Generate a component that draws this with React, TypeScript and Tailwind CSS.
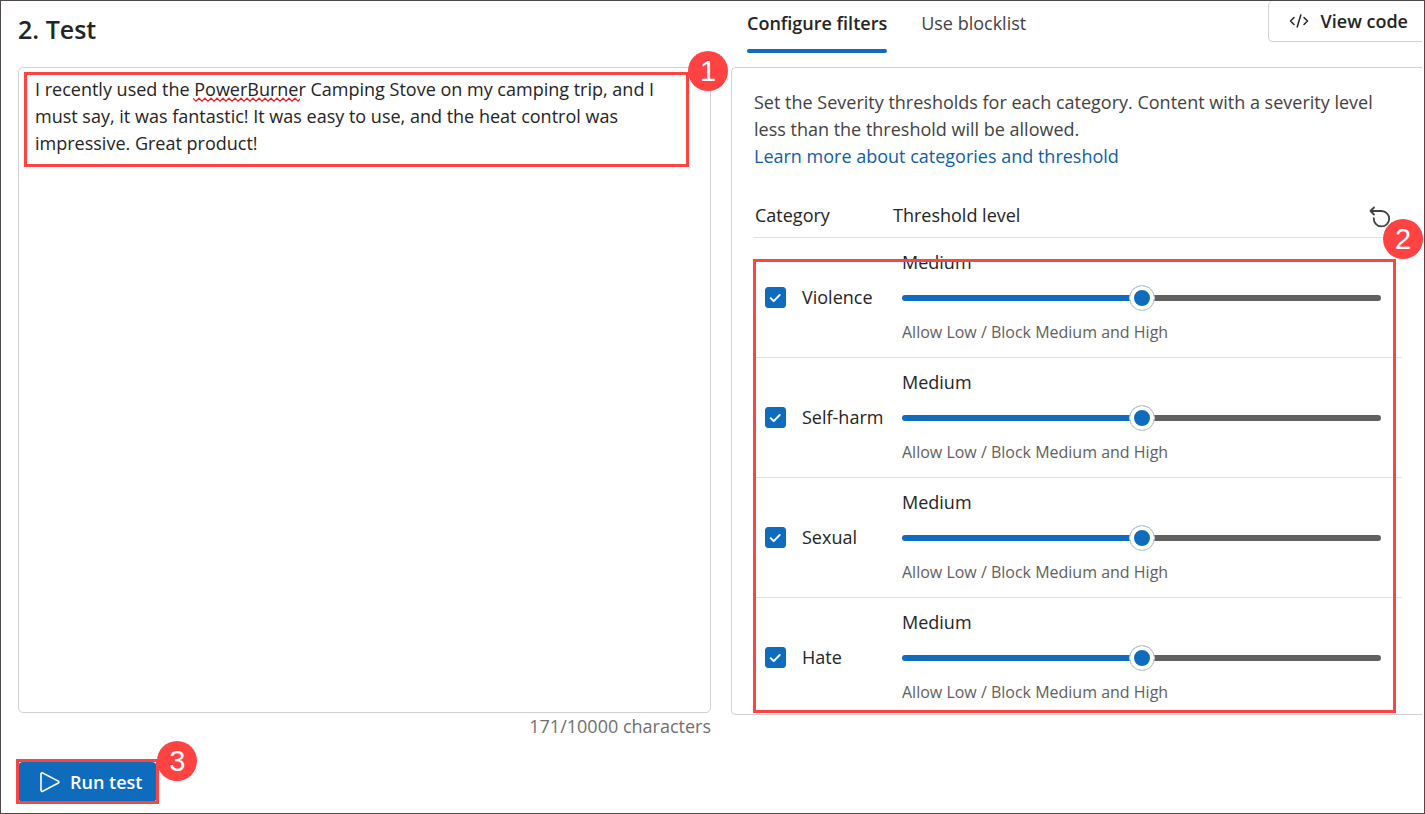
import { useState } from "react";

const SAMPLE =
  "I recently used the PowerBurner Camping Stove on my camping trip, and I must say, it was fantastic! It was easy to use, and the heat control was impressive. Great product!";

const LEVELS = ["Low", "Medium", "High"];
const HINTS = [
  "Block Low, Medium and High",
  "Allow Low / Block Medium and High",
  "Allow Low and Medium / Block High",
];

function Badge({ n, className }: { n: number; className: string }) {
  return (
    <span
      className={`pointer-events-none absolute z-20 flex size-10 items-center justify-center rounded-full bg-[#ff4343] font-['Liberation_Sans',sans-serif] text-[29px] leading-10 text-white ${className}`}
    >
      {n}
    </span>
  );
}

function Squiggle() {
  return (
    <svg
      className="pointer-events-none absolute top-[30px] left-[175px]"
      width="107"
      height="6"
      fill="none"
      stroke="#f01c24"
      strokeWidth="1.3"
      aria-hidden="true"
    >
      <path d="M0 1.2l3 3 3-3 3 3 3-3 3 3 3-3 3 3 3-3 3 3 3-3 3 3 3-3 3 3 3-3 3 3 3-3 3 3 3-3 3 3 3-3 3 3 3-3 3 3 3-3 3 3 3-3 3 3 3-3 3 3 3-3 3 3 3-3 3 3 3-3 3 3 3-3 3 3" />
    </svg>
  );
}

function CategoryRow({ name, last }: { name: string; last: boolean }) {
  const [checked, setChecked] = useState(true);
  const [level, setLevel] = useState(1);
  const id = name.toLowerCase();
  return (
    <tr className={last ? "" : "border-b border-[#e0e0e0]"}>
      <td className="w-[149px] p-0 pl-3 align-middle">
        <div className="flex items-center gap-4">
          <span className="relative flex size-[21px] shrink-0">
            <input
              id={id}
              type="checkbox"
              checked={checked}
              onChange={(e) => setChecked(e.target.checked)}
              className="peer size-[21px] appearance-none rounded-[3px] border border-[#616161] bg-white checked:border-[#0f6cbd] checked:bg-[#0f6cbd]"
            />
            <svg
              className="pointer-events-none absolute inset-0 hidden peer-checked:block"
              viewBox="0 0 21 21"
              fill="none"
              stroke="#fff"
              strokeWidth="1.9"
              strokeLinecap="round"
              strokeLinejoin="round"
              aria-hidden="true"
            >
              <path d="M5.7 11.200l3 3 6-6.200" />
            </svg>
          </span>
          <label htmlFor={id} className="whitespace-nowrap">
            {name}
          </label>
        </div>
      </td>
      <td className="p-0 pt-[11px] pr-[21px] pb-[15px]">
        <div className="flex flex-col">
          <label htmlFor={`${id}-level`}>{LEVELS[level]}</label>
          <input
            id={`${id}-level`}
            type="range"
            min={0}
            max={2}
            value={level}
            onChange={(e) => setLevel(Number(e.target.value))}
            style={{ "--fill": `${level * 50}%` } as React.CSSProperties}
            className="mt-[9px] mb-[11px] h-[26px] w-full appearance-none bg-transparent [&::-webkit-slider-runnable-track]:h-[6px] [&::-webkit-slider-runnable-track]:rounded-full [&::-webkit-slider-runnable-track]:bg-[linear-gradient(to_right,#0f6cbd_var(--fill),#616161_var(--fill))] [&::-webkit-slider-thumb]:-mt-[10px] [&::-webkit-slider-thumb]:size-[26px] [&::-webkit-slider-thumb]:appearance-none [&::-webkit-slider-thumb]:rounded-full [&::-webkit-slider-thumb]:border [&::-webkit-slider-thumb]:border-[#d1d1d1] [&::-webkit-slider-thumb]:bg-[#0f6cbd] [&::-webkit-slider-thumb]:shadow-[inset_0_0_0_4px_#fff]"
          />
          <span className="text-[16px] leading-5 text-[#616161]">{HINTS[level]}</span>
        </div>
      </td>
    </tr>
  );
}

export default function App() {
  const [text, setText] = useState(SAMPLE);
  return (
    <main className="grid min-h-screen grid-cols-[693fr_691fr] gap-x-5 border border-[#4d484a] bg-white pr-[2px] pl-[17px] font-['Open_Sans',sans-serif] text-[18px] leading-[27px] text-[#242424]">
      <section className="flex flex-col items-start">
        <h1 className="flex h-[66px] items-start pt-3 text-[25px] leading-8 font-semibold">2. Test</h1>
        <div className="relative flex h-[646px] w-full">
          <textarea
            aria-label="Text to test"
            spellCheck={false}
            value={text}
            onChange={(e) => setText(e.target.value)}
            className="w-full resize-none rounded-[5px] border border-[#d1d1d1] py-2 pr-9 pl-4 outline-none"
          />
          {text === SAMPLE && <Squiggle />}
          <div className="pointer-events-none absolute top-[5px] right-[22px] left-[6px] h-[95px] border-3 border-[#ff4343]" />
          <Badge n={1} className="-top-4 -right-[17px]" />
        </div>
        <p className="self-end text-[#707070]">{text.length}/10000 characters</p>
        <div className="relative mt-[22px]">
          <button
            type="button"
            className="flex h-10 items-center gap-2 rounded-[5px] bg-[#0f6cbd] pr-[15px] pl-5 font-semibold text-white"
          >
            <svg width="24" height="24" viewBox="0 0 24 24" fill="none" stroke="currentColor" strokeWidth="1.6" strokeLinejoin="round" aria-hidden="true">
              <path d="M3 4v16.200c0 .9.9 1.400 1.700 1L20.300 13c.8-.4.8-1.500 0-1.900L4.700 3C3.900 2.600 3 3.100 3 4z" />
            </svg>
            Run test
          </button>
          <div className="pointer-events-none absolute -inset-x-[2px] -top-[3px] -bottom-[2px] border-3 border-[#ff4343]" />
          <Badge n={3} className="-top-[21px] -right-10" />
        </div>
      </section>

      <section className="flex flex-col">
        <div className="flex h-[66px] items-start justify-between pl-4">
          <div role="tablist" className="flex gap-[34px] pt-[9px]">
            <button type="button" role="tab" aria-selected="true" className="flex flex-col gap-3 font-semibold">
              Configure filters
              <span className="h-1 w-full rounded-full bg-[#0f6cbd]" />
            </button>
            <button type="button" role="tab" aria-selected="false" className="flex text-[#424242]">
              Use blocklist
            </button>
          </div>
          <button
            type="button"
            className="flex h-[41px] items-center gap-3 rounded-l-[5px] border-b border-l border-[#d1d1d1] pr-[14px] pl-5 font-semibold"
          >
            <svg width="20" height="16" viewBox="0 0 20 16" fill="none" stroke="currentColor" strokeWidth="1.5" strokeLinecap="round" strokeLinejoin="round" aria-hidden="true">
              <path d="M5 4.500L1.500 8 5 11.500M15 4.500L18.500 8 15 11.500M11.800 2L8.200 14" />
            </svg>
            View code
          </button>
        </div>

        <div className="relative h-[648px] rounded-l-[5px] border border-r-0 border-[#d1d1d1] pt-[21px] pr-5 pl-[21px]">
          <p className="pl-px text-[#424242]">
            Set the Severity thresholds for each category. Content with a severity level less than the threshold will be
            allowed.
            <br />
            <a href="#categories" className="text-[#115ea3]">
              Learn more about categories and threshold
            </a>
          </p>
          <table className="mt-8 w-full border-collapse text-left">
            <thead>
              <tr className="h-[35px] border-b border-[#e0e0e0]">
                <th className="p-0 pl-[2px] align-top font-normal">Category</th>
                <th className="p-0 align-top font-normal">
                  <div className="-ml-[9px] flex items-start justify-between pr-[10px]">
                    Threshold level
                    <button type="button" aria-label="Reset thresholds" className="pt-[3px]">
                      <svg width="24" height="24" viewBox="0 0 24 24" fill="none" stroke="#424242" strokeWidth="1.8" strokeLinecap="round" strokeLinejoin="round" aria-hidden="true">
                        <path d="M6 2.500L2.500 6 6 9.500M3 6h10.500a7.700 7.700 0 1 1-7.700 7.200" />
                      </svg>
                    </button>
                  </div>
                </th>
              </tr>
            </thead>
            <tbody>
              {["Violence", "Self-harm", "Sexual", "Hate"].map((name, i) => (
                <CategoryRow key={name} name={name} last={i === 3} />
              ))}
            </tbody>
          </table>
          <div className="pointer-events-none absolute top-[191px] right-[26px] bottom-px left-[21px] border-3 border-[#ff4343]" />
          <Badge n={2} className="top-[151px] -right-px" />
        </div>
      </section>
    </main>
  );
}
